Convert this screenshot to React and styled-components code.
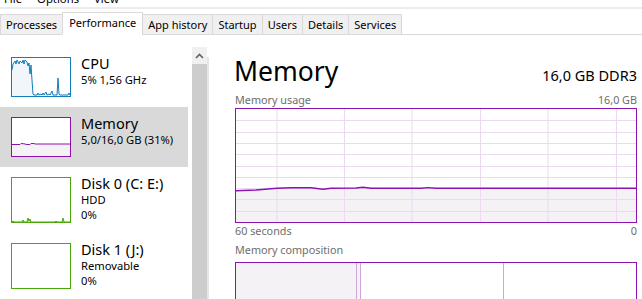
import React from "react";
import styled, { createGlobalStyle } from "styled-components";

const FONT = `"Segoe UI", "Noto Sans", "Open Sans", sans-serif`;
const PURPLE = "#8b12ae";
const BLUE = "#117dbb";
const GREEN = "#4da60c";

const GlobalStyle = createGlobalStyle`
  html, body { margin: 0; padding: 0; background: #fff; }
  body { width: 642px; height: 299px; overflow: hidden; font-family: ${FONT}; color: #000; }
  * { box-sizing: border-box; }
`;

const Window = styled.div`
  width: 642px;
  height: 299px;
  display: flex;
  flex-direction: column;
  overflow: hidden;
`;

const MenuBar = styled.div`
  display: flex;
  gap: 15px;
  padding-left: 4px;
  margin-top: -9px;
  height: 18px;
  font-size: 11.3px;
  line-height: 15px;
  border-bottom: 2px solid #ececec;
`;

const TabStrip = styled.div`
  display: flex;
  align-items: flex-end;
  padding-top: 3px;
`;

const Tab = styled.div`
  font-size: 11px;
  line-height: 19px;
  height: ${(p) => (p.$active ? 23 : 21)}px;
  padding: 0 ${(p) => (p.$active ? 6 : 5)}px ${(p) => (p.$active ? 2 : 0)}px;
  background: ${(p) => (p.$active ? "#fff" : "#f0f0f0")};
  border: 1px solid #d9d9d9;
  border-bottom-color: ${(p) => (p.$active ? "#fff" : "#d9d9d9")};
  margin-right: -1px;
  white-space: nowrap;
`;

const TabFiller = styled.div`
  flex: 1;
  height: 1px;
  border-bottom: 1px solid #d9d9d9;
`;

const Main = styled.div`
  flex: 1;
  display: flex;
  min-height: 0;
`;

const LeftPane = styled.div`
  width: 209px;
  display: flex;
  padding-top: 12px;
`;

const List = styled.div`
  width: 188px;
  display: flex;
  flex-direction: column;
`;

const Item = styled.div`
  display: flex;
  gap: 10px;
  padding: 10px 0 10px 11px;
  background: ${(p) => (p.$selected ? "#d9d9d9" : "transparent")};
`;

const Thumb = styled.div`
  width: 60px;
  height: ${(p) => p.$h}px;
  border: 1px solid ${(p) => p.$color};
  background: #fff;
  flex: none;
  display: flex;
  svg { display: block; }
`;

const TextCol = styled.div`
  display: flex;
  flex-direction: column;
  margin-top: -3px;
`;

const ItemTitle = styled.div`
  font-size: 14.5px;
  line-height: 18px;
  white-space: nowrap;
`;

const ItemSub = styled.div`
  font-size: 11.2px;
  line-height: 15px;
  white-space: nowrap;
`;

const Scrollbar = styled.div`
  width: 17px;
  margin-left: 4px;
  display: flex;
  flex-direction: column;
`;

const ScrollButton = styled.div`
  height: 17px;
  background: #f0f0f0;
  display: flex;
  align-items: center;
  justify-content: center;
  width: 15px;
`;

const ScrollTrack = styled.div`
  flex: 1;
  display: flex;
`;

const ScrollThumb = styled.div`
  width: 15px;
  background: #cdcdcd;
`;

const ScrollEdge = styled.div`
  width: 2px;
  margin-top: -7px;
  background: #e6e6e6;
`;

const RightPane = styled.div`
  flex: 1;
  display: flex;
  flex-direction: column;
  padding: 20px 5px 0 26px;
`;

const TitleRow = styled.div`
  display: flex;
  justify-content: space-between;
  align-items: baseline;
  height: 33px;
`;

const BigTitle = styled.div`
  font-size: 26.5px;
  line-height: 33px;
  font-weight: 400;
  margin-left: -1px;
`;

const Spec = styled.div`
  font-size: 14.5px;
  line-height: 18px;
`;

const LabelRow = styled.div`
  display: flex;
  justify-content: space-between;
  font-size: 10.8px;
  line-height: 14px;
  color: #6d6d6d;
  margin-top: ${(p) => p.$mt || 0}px;
  margin-bottom: ${(p) => p.$mb || 0}px;
`;

const Chart = styled.div`
  height: 115px;
  border: 1px solid ${PURPLE};
  svg { display: block; }
`;

const CompositionBar = styled.div`
  margin-top: 5px;
  height: 50px;
  flex: none;
  border: 1px solid ${PURPLE};
  display: flex;
`;

const Segment = styled.div`
  width: ${(p) => p.$w}px;
  flex: ${(p) => (p.$grow ? 1 : "none")};
  background: ${(p) => p.$bg || "#fff"};
  border-right: ${(p) => (p.$line ? "1px solid #cfa6da" : "none")};
`;

function pts(arr) {
  return arr.map(([x, y]) => `${x},${y}`).join(" ");
}

function area(arr, w, h) {
  return pts([[0, h], ...arr, [w, h]]);
}

const cpuData = [
  [0, 12], [1, 6], [3, 3], [4, 6], [5, 2], [7, 6], [8, 3], [10, 5], [11, 2], [12, 6],
  [13, 2], [15, 4], [16, 8], [17, 5], [18, 16], [19, 7], [20, 22], [21, 36], [22, 37],
  [25, 37], [26, 35], [27, 37], [29, 36], [30, 37], [31, 35], [32, 37], [34, 34], [35, 37],
  [37, 36], [38, 37], [40, 33], [41, 37], [45, 37], [46, 20], [47, 36], [48, 37], [56, 37],
  [57, 35], [58, 37],
];

const memThumbData = [
  [0, 26.5], [8, 26.5], [9, 25.5], [12, 25.8], [15, 26.5], [18, 26.5], [19, 25.5],
  [22, 25.5], [23, 26], [58, 26],
];

const diskData = [
  [0, 44], [1, 43], [2, 44], [10, 44], [11, 42], [12, 44], [15, 44], [16, 40], [17, 43],
  [18, 41], [19, 44], [43, 44], [44, 43], [45, 44], [50, 44], [51, 40], [52, 44], [58, 44],
];

const memChartData = [
  [0, 81.8], [20, 81], [41, 79.3], [55, 78.8], [75, 78.8], [87, 80.3], [95, 79.3],
  [120, 79], [127, 78.3], [135, 79.2], [185, 79.2], [192, 78.6], [200, 79.2], [400, 79.2],
];

function Spark({ data, w, h, stroke, fill, fillOpacity = 1 }) {
  return (
    <svg width={w} height={h} viewBox={`0 0 ${w} ${h}`}>
      {data && (
        <>
          <polygon points={area(data, w, h)} fill={fill} fillOpacity={fillOpacity} />
          <polyline points={pts(data)} fill="none" stroke={stroke} strokeWidth="1" />
        </>
      )}
    </svg>
  );
}

function MemoryChart() {
  const w = 400;
  const h = 113;
  const vx = [41, 108.5, 176, 244.5, 312, 380.5];
  const hy = [1, 2, 3, 4, 5, 6, 7, 8, 9].map((k) => Math.round(11.3 * k) + 0.5);
  return (
    <svg width="100%" height={h} viewBox={`0 0 ${w} ${h}`} preserveAspectRatio="none">
      <polygon points={area(memChartData, w, h)} fill="#f4f2f4" />
      {vx.map((x) => (
        <line key={"v" + x} x1={x} x2={x} y1={0} y2={h} stroke="#ecdaf1" strokeWidth="1" />
      ))}
      {hy.map((y) => (
        <line key={"h" + y} x1={0} x2={w} y1={y} y2={y} stroke="#ecdaf1" strokeWidth="1" />
      ))}
      <polyline points={pts(memChartData)} fill="none" stroke={PURPLE} strokeWidth="1.4" />
    </svg>
  );
}

const items = [
  { title: "CPU", lines: ["5% 1,56 GHz"], color: BLUE, h: 40, data: cpuData, fill: "#f1f6fa" },
  { title: "Memory", lines: ["5,0/16,0 GB (31%)"], color: PURPLE, h: 40, data: memThumbData, fill: "#f4f2f4", selected: true },
  { title: "Disk 0 (C: E:)", lines: ["HDD", "0%"], color: GREEN, h: 46, data: diskData, fill: GREEN, op: 0.35 },
  { title: "Disk 1 (J:)", lines: ["Removable", "0%"], color: GREEN, h: 46 },
];

const tabs = ["Processes", "Performance", "App history", "Startup", "Users", "Details", "Services"];

export default function App() {
  return (
    <>
      <GlobalStyle />
      <Window>
        <MenuBar>
          <span>File</span>
          <span>Options</span>
          <span>View</span>
        </MenuBar>
        <TabStrip>
          {tabs.map((t) => (
            <Tab key={t} $active={t === "Performance"}>{t}</Tab>
          ))}
          <TabFiller />
        </TabStrip>
        <Main>
          <LeftPane>
            <List>
              {items.map((it) => (
                <Item key={it.title} $selected={it.selected}>
                  <Thumb $h={it.h} $color={it.color}>
                    <Spark data={it.data} w={58} h={it.h - 2} stroke={it.color} fill={it.fill} fillOpacity={it.op || 1} />
                  </Thumb>
                  <TextCol>
                    <ItemTitle>{it.title}</ItemTitle>
                    {it.lines.map((l, i) => (
                      <ItemSub key={i}>{l}</ItemSub>
                    ))}
                  </TextCol>
                </Item>
              ))}
            </List>
            <Scrollbar>
              <ScrollButton>
                <svg width="9" height="6" viewBox="0 0 9 6">
                  <polyline points="1,5 4.5,1.5 8,5" fill="none" stroke="#606060" strokeWidth="1.6" />
                </svg>
              </ScrollButton>
              <ScrollTrack>
                <ScrollThumb />
                <ScrollEdge />
              </ScrollTrack>
            </Scrollbar>
          </LeftPane>
          <RightPane>
            <TitleRow>
              <BigTitle>Memory</BigTitle>
              <Spec>16,0 GB DDR3</Spec>
            </TitleRow>
            <LabelRow $mt={5} $mb={1}>
              <span>Memory usage</span>
              <span>16,0 GB</span>
            </LabelRow>
            <Chart>
              <MemoryChart />
            </Chart>
            <LabelRow $mt={1}>
              <span>60 seconds</span>
              <span>0</span>
            </LabelRow>
            <LabelRow $mt={5}>
              <span>Memory composition</span>
            </LabelRow>
            <CompositionBar>
              <Segment $w={121} $bg="#f4f2f4" $line />
              <Segment $w={4} $bg="#f4f2f4" $line />
              <Segment $w={143} $line />
              <Segment $grow />
            </CompositionBar>
          </RightPane>
        </Main>
      </Window>
    </>
  );
}
